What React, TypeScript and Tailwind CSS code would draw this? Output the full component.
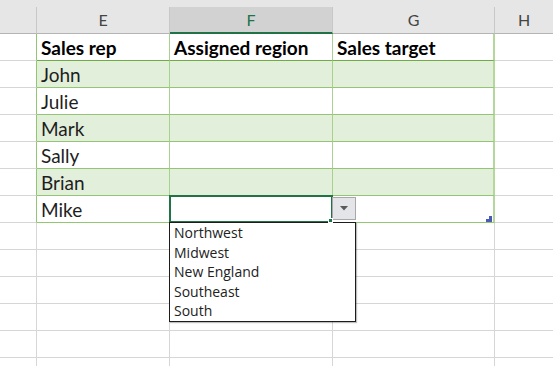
const ROWS = [
  { name: "Sales rep", region: "Assigned region", target: "Sales target", head: true, band: false },
  { name: "John", region: "", target: "", head: false, band: true },
  { name: "Julie", region: "", target: "", head: false, band: false },
  { name: "Mark", region: "", target: "", head: false, band: true },
  { name: "Sally", region: "", target: "", head: false, band: false },
  { name: "Brian", region: "", target: "", head: false, band: true },
  { name: "Mike", region: "", target: "", head: false, band: false },
];

const REGIONS = ["Northwest", "Midwest", "New England", "Southeast", "South"];

const cellFont = { fontFamily: "Lato, 'Liberation Sans', sans-serif" };

const ColumnHeaders = () => (
  <div className="flex flex-row h-[34px] shrink-0 items-end bg-[#e6e6e6]">
    <div className="w-[37px] h-[27px] border-r border-b border-r-[#c8c8c8] border-b-[#b4b4b4]" />
    <div className="w-[133px] h-[27px] flex items-center justify-center border-r border-b border-r-[#c8c8c8] border-b-[#b4b4b4] text-[16px] text-[#444]">
      E
    </div>
    <div className="w-[163px] h-[27px] flex items-center justify-center border-r border-b-2 border-r-[#c8c8c8] border-b-[#217346] bg-[#d2d2d2] text-[16px] text-[#217346]">
      F
    </div>
    <div className="w-[162px] h-[27px] flex items-center justify-center border-r border-b border-r-[#c8c8c8] border-b-[#b4b4b4] text-[16px] text-[#444]">
      G
    </div>
    <div className="flex-1 h-[27px] flex items-center justify-center border-b border-b-[#b4b4b4] text-[16px] text-[#444]">
      H
    </div>
  </div>
);

const ResizeHandle = () => (
  <svg className="absolute right-[1px] bottom-0" width="6" height="6" viewBox="0 0 6 6">
    <polygon points="3,0 6,0 6,6 0,6 0,3 3,3" fill="#4b5bb3" />
  </svg>
);

const Dropdown = () => (
  <>
    <div className="absolute -left-px -top-px w-[164px] h-[28px] border-2 border-[#217346] pointer-events-none z-10" />
    <div className="absolute left-[162px] top-[1px] w-[24px] h-[23px] flex items-center justify-center bg-[#e4e5e8] border border-[#a8a8a8] z-10">
      <svg width="8" height="5" viewBox="0 0 8 5">
        <polygon points="0,0 8,0 4,4.5" fill="#5a5a5a" />
      </svg>
    </div>
    <div
      className="absolute -left-px top-[26px] w-[187px] h-[100px] flex flex-col bg-white border border-[#1c1c1c] shadow-[1px_1px_1px_rgba(0,0,0,0.25)] z-10"
      style={{ fontFamily: "'Open Sans', 'Noto Sans', sans-serif" }}
    >
      {REGIONS.map((r) => (
        <div key={r} className="h-[19.5px] pl-[4px] leading-[19.5px] text-[14px] text-[#222]">
          {r}
        </div>
      ))}
    </div>
    <div className="absolute left-[158px] top-[22px] w-[5px] h-[5px] bg-[#217346] border border-white z-20" />
  </>
);

const TableRow = ({ row, last }: { row: (typeof ROWS)[number]; last: boolean }) => {
  const fill = row.band ? "bg-[#e2efda]" : "bg-white";
  const bottom = row.head ? "border-b-[#6fac46]" : "border-b-[#93c672]";
  const weight = row.head ? "font-bold text-black" : "text-[#1e1e1e]";
  return (
    <div className="flex flex-row h-[27px] shrink-0" style={cellFont}>
      <div className="w-[37px] h-full border-r border-b border-r-[#93c672] border-b-[#d6d6d6]" />
      <div className={`w-[133px] h-full border-r border-b border-r-[#a9d08e] ${bottom} ${fill} pl-[4px] text-[19px] leading-[27px] ${weight}`}>
        {row.name}
      </div>
      <div className={`relative w-[163px] h-full border-r border-b border-r-[#a9d08e] ${bottom} ${fill} pl-[4px] text-[19px] leading-[27px] ${weight}`}>
        {row.region}
        {last && <Dropdown />}
      </div>
      <div className={`relative w-[162px] h-full border-r-2 border-b border-r-[#b4d89b] ${bottom} ${fill} pl-[4px] text-[19px] leading-[27px] ${weight}`}>
        {row.target}
        {last && <ResizeHandle />}
      </div>
      <div className="flex-1 h-full border-b border-b-[#d6d6d6]" />
    </div>
  );
};

const BlankRow = () => (
  <div className="flex flex-row h-[27px] shrink-0">
    <div className="w-[37px] h-full border-r border-b border-[#d6d6d6]" />
    <div className="w-[133px] h-full border-r border-b border-[#d6d6d6]" />
    <div className="w-[163px] h-full border-r border-b border-[#d6d6d6]" />
    <div className="w-[162px] h-full border-r border-b border-[#d6d6d6]" />
    <div className="flex-1 h-full border-b border-[#d6d6d6]" />
  </div>
);

export default function App() {
  return (
    <div
      className="w-[553px] h-[366px] flex flex-col overflow-hidden bg-white"
      style={{ fontFamily: "Lato, 'Liberation Sans', sans-serif" }}
    >
      <ColumnHeaders />
      {ROWS.map((row, i) => (
        <TableRow key={row.name} row={row} last={i === ROWS.length - 1} />
      ))}
      {[0, 1, 2, 3, 4, 5].map((i) => (
        <BlankRow key={i} />
      ))}
    </div>
  );
}
